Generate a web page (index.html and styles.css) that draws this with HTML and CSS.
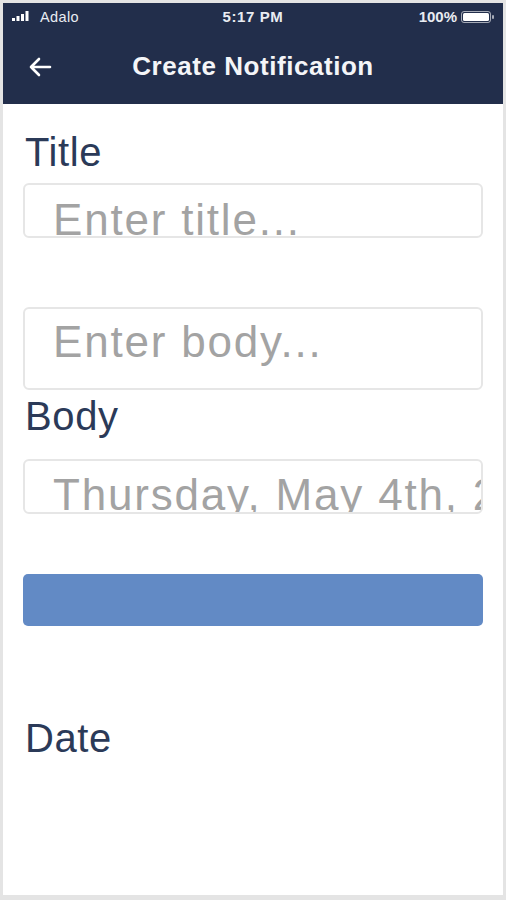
FILE: index.html
```html
<!DOCTYPE html>
<html>
<head>
<meta charset="utf-8">
<link rel="stylesheet" href="styles.css">
</head>
<body>
<div class="phone">
  <header class="header">
    <div class="statusbar">
      <div class="sb-left">
        <svg class="signal" width="20" height="10" viewBox="0 0 20 10">
          <rect x="0" y="7" width="3" height="3" fill="#fff"/>
          <rect x="4.5" y="5" width="3" height="5" fill="#fff"/>
          <rect x="9" y="3" width="3" height="7" fill="#fff"/>
          <rect x="13.5" y="0" width="3" height="10" fill="#fff"/>
        </svg>
        <span class="carrier">Adalo</span>
      </div>
      <div class="sb-time">5:17 PM</div>
      <div class="sb-right">
        <span class="pct">100%</span>
        <svg class="battery" width="34" height="12" viewBox="0 0 34 12">
          <rect x="0.5" y="0.5" width="29" height="11" rx="2.5" fill="none" stroke="#fff" stroke-opacity="0.6"/>
          <rect x="2" y="2" width="26" height="8" rx="1.5" fill="#fff"/>
          <rect x="31" y="4" width="2" height="4" rx="1" fill="#fff" fill-opacity="0.6"/>
        </svg>
      </div>
    </div>
    <div class="navbar">
      <svg class="back" width="24" height="20" viewBox="0 0 24 20">
        <path d="M22 10H3M11 2L3 10l8 8" fill="none" stroke="#fff" stroke-width="2.6" stroke-linecap="round" stroke-linejoin="round"/>
      </svg>
      <h1 class="nav-title">Create Notification</h1>
    </div>
  </header>
  <main class="content">
    <div class="label label-title">Title</div>
    <div class="field field-title"><span class="ph">Enter title...</span></div>
    <div class="field field-body"><span class="ph">Enter body...</span></div>
    <div class="label label-body">Body</div>
    <div class="field field-date"><span class="ph">Thursday, May 4th, 2023</span></div>
    <div class="button"></div>
    <div class="label label-date">Date</div>
  </main>
</div>
</body>
</html>
```

FILE: styles.css
```css
html, body {
  margin: 0;
  padding: 0;
}
body {
  width: 506px;
  height: 900px;
  background: #e4e4e4;
  font-family: "Liberation Sans", Arial, sans-serif;
  overflow: hidden;
}
.phone {
  margin: 3px 3px 0 3px;
  height: 892px;
  background: #ffffff;
  overflow: hidden;
}
.header {
  background: #222e4b;
  color: #fff;
}
.statusbar {
  height: 27px;
  display: flex;
  align-items: center;
  justify-content: space-between;
  padding: 0 8px 0 9px;
  position: relative;
}
.sb-left {
  display: flex;
  align-items: center;
  gap: 8px;
  font-size: 14.5px;
  color: #e9ecf2;
}
.signal {
  margin-top: -2px;
}
.carrier {
  letter-spacing: 0.4px;
}
.sb-time {
  position: absolute;
  left: 0;
  right: 0;
  text-align: center;
  font-weight: bold;
  font-size: 15px;
  letter-spacing: 0.6px;
  color: #e9ecf2;
  pointer-events: none;
}
.sb-right {
  display: flex;
  align-items: center;
  gap: 4px;
  font-size: 15px;
  font-weight: bold;
  color: #e9ecf2;
}
.navbar {
  height: 74px;
  display: flex;
  align-items: center;
  justify-content: center;
  position: relative;
}
.back {
  position: absolute;
  left: 25px;
  top: 27px;
}
.nav-title {
  margin: 0;
  font-size: 26px;
  font-weight: bold;
  letter-spacing: 0.55px;
  color: #f4f5f8;
  margin-top: -1px;
}
.content {
  padding: 0 20px;
}
.label {
  font-size: 40px;
  line-height: 48px;
  color: #2b3a58;
  letter-spacing: 0.6px;
  padding-left: 2px;
}
.label-title {
  margin-top: 24px;
}
.label-body {
  margin-top: 2px;
}
.label-date {
  margin-top: 88px;
}
.field {
  box-sizing: border-box;
  border: 2px solid #e6e6e6;
  border-radius: 6px;
  overflow: hidden;
  white-space: nowrap;
  padding-left: 28px;
}
.ph {
  display: block;
  font-size: 44px;
  line-height: 44px;
  letter-spacing: 1.8px;
  color: #a3a3a3;
}
.field-title {
  margin-top: 7px;
  height: 55px;
  padding-top: 13px;
}
.field-body {
  margin-top: 69px;
  height: 83px;
  padding-top: 11px;
}
.field-date {
  margin-top: 19px;
  height: 55px;
  padding-top: 12px;
}
.button {
  margin-top: 60px;
  height: 52px;
  border-radius: 5px;
  background: #628ac5;
}
```
